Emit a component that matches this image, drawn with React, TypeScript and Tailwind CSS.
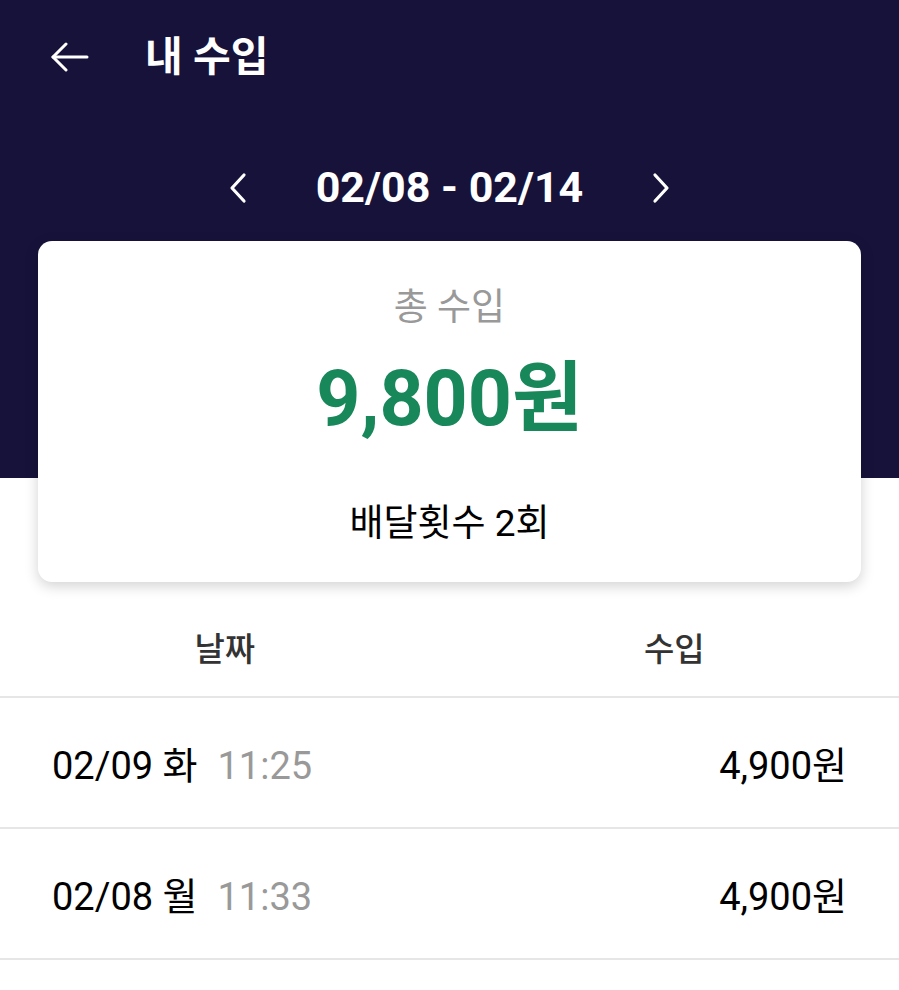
import React from "react";

const font = { fontFamily: 'Roboto, "Noto Sans CJK KR", sans-serif' };

export default function App() {
  const rows = [
    { date: "02/09 화", time: "11:25", amount: "4,900원" },
    { date: "02/08 월", time: "11:33", amount: "4,900원" },
  ];
  return (
    <div className="w-[899px] h-[990px] bg-white overflow-hidden" style={font}>
      <div className="bg-[#17123a] h-[478px]">
        <div className="h-[114px] flex items-center pl-[50px]">
          <svg width="40" height="30" viewBox="0 0 40 30" fill="none" stroke="white" strokeWidth="3" strokeLinecap="round" strokeLinejoin="round">
            <path d="M3 15H37" />
            <path d="M16 2L3 15L16 28" />
          </svg>
          <span className="ml-[55px] text-white text-[41px] font-bold leading-none">내 수입</span>
        </div>
        <div className="h-[127px] flex items-center justify-center pt-[20px]">
          <svg width="20" height="32" viewBox="0 0 20 32" fill="none" stroke="white" strokeWidth="3.2" strokeLinecap="round" strokeLinejoin="round">
            <path d="M16 3L4 16L16 29" />
          </svg>
          <span className="mx-[68px] text-white text-[43px] font-bold leading-none">02/08 - 02/14</span>
          <svg width="20" height="32" viewBox="0 0 20 32" fill="none" stroke="white" strokeWidth="3.2" strokeLinecap="round" strokeLinejoin="round">
            <path d="M4 3L16 16L4 29" />
          </svg>
        </div>
        <div className="mx-[38px] relative z-10 bg-white rounded-[14px] shadow-[0_4px_14px_rgba(0,0,0,0.18)] flex flex-col items-center pt-[47px] pb-[38px]">
          <div className="text-[37px] leading-[40px] text-[#999999]">총 수입</div>
          <div className="mt-[31px] text-[77px] leading-[80px] font-bold text-[#18875a]">9,800원</div>
          <div className="mt-[65px] text-[37px] leading-[40px] text-black">배달횟수 2회</div>
        </div>
      </div>
      <div className="pt-[104px]">
        <div className="grid grid-cols-2 h-[116px] pt-[22px] items-center text-center text-[33px] font-medium text-[#333333] border-b-2 border-[#e6e6e6]">
          <div>날짜</div>
          <div>수입</div>
        </div>
        {rows.map((r) => (
          <div key={r.date} className="h-[131px] flex items-center justify-between pl-[52px] pr-[52px] pt-[6px] border-b-2 border-[#e6e6e6] text-[38px] leading-none">
            <div>
              <span className="text-black">{r.date}</span>
              <span className="ml-[20px] text-[#999999]">{r.time}</span>
            </div>
            <div className="text-black">{r.amount}</div>
          </div>
        ))}
      </div>
    </div>
  );
}
